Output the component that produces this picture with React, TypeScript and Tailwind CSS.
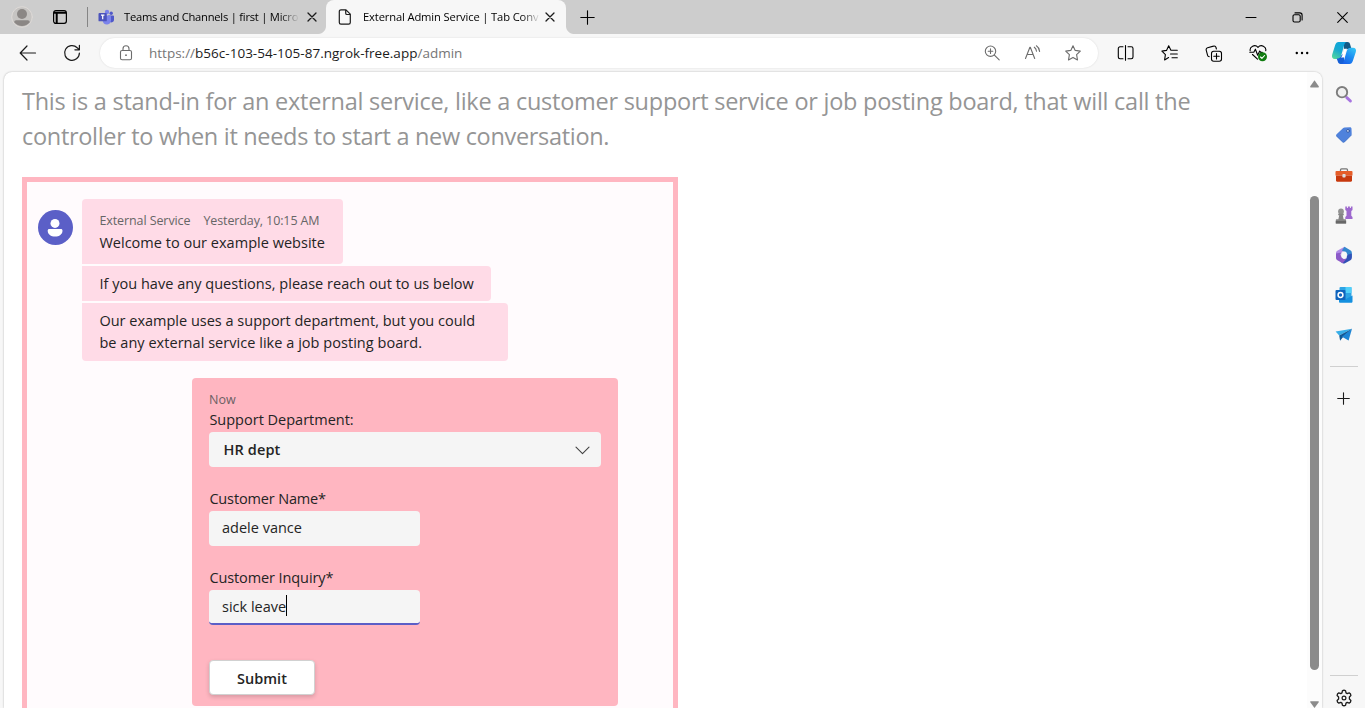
import React, { ReactNode } from 'react';

type IconProps = { w?: number; h?: number; className?: string; children: ReactNode };

function Icon({ w = 18, h = 18, className = '', children }: IconProps) {
  return (
    <svg
      width={w}
      height={h}
      viewBox={`0 0 ${w} ${h}`}
      fill="none"
      stroke="currentColor"
      strokeWidth="1.1"
      strokeLinecap="round"
      strokeLinejoin="round"
      className={`block shrink-0 ${className}`}
    >
      {children}
    </svg>
  );
}

function CloseIcon() {
  return (
    <Icon w={10} h={10} className="text-[#1b1b1b]">
      <path d="M1 1l8 8M9 1l-8 8" strokeWidth="1.3" />
    </Icon>
  );
}

function TeamsLogo() {
  return (
    <Icon w={16} h={16}>
      <g stroke="none">
        <circle cx="13.2" cy="4.2" r="1.7" fill="#5059c9" />
        <circle cx="9" cy="3" r="2.2" fill="#7b83eb" />
        <path d="M10 6.5h5.2c.4 0 .8.3.8.8v3.4a2.6 2.6 0 0 1-4 2.3z" fill="#5059c9" />
        <path d="M5 6.5h7.3c.4 0 .7.3.7.7v4.3a4.2 4.2 0 0 1-8.2 1z" fill="#7b83eb" />
        <rect x="0.5" y="4" width="8.3" height="8.3" rx="0.9" fill="#4b53bc" />
      </g>
      <path d="M3 6.2h3.4M4.7 6.2v4" stroke="#fff" strokeWidth="1.2" strokeLinecap="butt" />
    </Icon>
  );
}

function TabStrip() {
  return (
    <header className="flex h-[34px] shrink-0 bg-[#cdcdcd]">
      <div className="flex w-[88px] items-center pl-[11px]">
        <Icon w={22} h={22}>
          <circle cx="11" cy="11" r="10.3" fill="#c6c4c2" stroke="#dedad7" strokeWidth="1" />
          <circle cx="11" cy="8" r="5" fill="#8b8785" stroke="none" />
          <path d="M3.2 16.2c0-1.3.8-2 2-2h11.6c1.2 0 2 .7 2 2a10 10 0 0 1-15.6 0z" fill="#8b8785" stroke="none" />
        </Icon>
        <Icon w={16} h={16} className="ml-[19px] text-black">
          <rect x="1.6" y="1.6" width="12.8" height="12.8" rx="2.3" strokeWidth="1.2" />
          <path d="M2 3.7h12M4.7 4v10" strokeWidth="2" strokeLinecap="butt" />
        </Icon>
        <div className="ml-[19px] h-5 w-px shrink-0 bg-[#858585]" />
      </div>
      <div className="flex w-[238px] items-center pl-[10px]">
        <TeamsLogo />
        <div className="ml-[10px] w-[177px] whitespace-nowrap bg-linear-to-r from-black from-86% to-[#cdcdcd] to-99% bg-clip-text text-[11.2px] tracking-[-0.24px] text-transparent">
          Teams and Channels | first | Micro
        </div>
        <div className="ml-[6px]">
          <CloseIcon />
        </div>
      </div>
      <div className="relative flex w-[240px] items-center rounded-t-[8px] bg-[#f7f7f7] pl-[12px]">
        <div className="absolute bottom-0 left-[-8px] size-2 bg-[radial-gradient(circle_at_0_0,#cdcdcd_7.5px,#f7f7f7_8.5px)]" />
        <div className="absolute bottom-0 right-[-8px] size-2 bg-[radial-gradient(circle_at_100%_0,#cdcdcd_7.5px,#f7f7f7_8.5px)]" />
        <Icon w={14} h={16} className="text-[#1b1b1b]">
          <path d="M3 .8h5l4.3 4.3v8.3a1.7 1.7 0 0 1-1.7 1.7H3a1.7 1.7 0 0 1-1.700-1.700V2.500A1.700 1.700 0 0 1 3 .8zM7.700 1v3.200c0 .8.500 1.300 1.300 1.300h3.200" strokeWidth="1.2" />
        </Icon>
        <div className="ml-[11px] w-[177px] whitespace-nowrap bg-linear-to-r from-black from-88% to-[#f7f7f7] bg-clip-text text-[11.2px] tracking-[-0.14px] text-transparent">
          External Admin Service | Tab Conv
        </div>
        <div className="ml-[5px]">
          <CloseIcon />
        </div>
      </div>
      <div className="flex flex-1 items-center pl-[14px] text-black">
        <Icon w={15} h={15}>
          <path d="M7.500 .8v13.400M.8 7.500h13.400" />
        </Icon>
      </div>
      <div className="flex items-center gap-[35px] pr-[17px] text-black">
        <Icon w={12} h={12}>
          <path d="M1 6.500h10" strokeWidth="1" />
        </Icon>
        <Icon w={11} h={11} className="-mr-px">
          <rect x="1" y="2.800" width="7.200" height="7.200" rx="1.500" />
          <path d="M3 .9h4.800a2.300 2.300 0 0 1 2.300 2.300v4.700" />
        </Icon>
        <Icon w={11} h={11}>
          <path d="M.7.7l9.600 9.600M10.300.7L.7 10.300" />
        </Icon>
      </div>
    </header>
  );
}

function CopilotLogo() {
  return (
    <svg width="26" height="24" viewBox="0 0 26 24" className="block shrink-0">
      <defs>
        <linearGradient id="cpA" x1="0.7" y1="0" x2="0.2" y2="1">
          <stop offset="0" stopColor="#0aa5dc" />
          <stop offset="0.5" stopColor="#18a9d0" />
          <stop offset="1" stopColor="#52d79c" />
        </linearGradient>
        <linearGradient id="cpB" x1="0.8" y1="0" x2="0.2" y2="1">
          <stop offset="0" stopColor="#35c3f5" />
          <stop offset="0.5" stopColor="#1b8cf3" />
          <stop offset="1" stopColor="#1a5fe8" />
        </linearGradient>
      </defs>
      <path d="M13 1h3.500c1.500 0 2.200.9 2.600 2.200L20.500 8h-4c-2 0-3 1-3.600 3z" fill="#115a86" />
      <path d="M7.500 1H16c-1.500 0-2.300 1.200-2.800 3l-3 10.500c-.7 2.300-1.800 3.500-4 3.500H4c-2.500 0-3.600-1.800-2.800-4.500l3-9.500C4.900 2 5.900 1 7.500 1z" fill="url(#cpA)" />
      <path d="M13 23H9.500c-1.500 0-2.200-.9-2.600-2.200L5.700 17.500c2.400.200 3.800-.700 4.500-3L13 12z" fill="#155fd6" />
      <path d="M18.500 23H10c1.500 0 2.300-1.200 2.800-3l3-10.300C16.500 7.600 17.600 6.700 19.500 6.700H22c2.500 0 3.600 1.700 2.800 4.300L21.800 20c-.7 2-1.700 3-3.300 3z" fill="url(#cpB)" />
      <path d="M13.200 7.800h3.100c-1 .5-1.400 1.400-1.800 2.700l-1.700 6h-3c.9-.6 1.300-1.500 1.600-2.600z" fill="#fff" />
    </svg>
  );
}

function Toolbar() {
  return (
    <div className="flex h-[38px] shrink-0 items-center pr-[8px] text-[#1b1b1b]">
      <Icon w={18} h={16} className="ml-[19px]">
        <path d="M16.500 8H1.500M8 1L1.200 8 8 15" strokeWidth="1.2" />
      </Icon>
      <Icon w={18} h={18} className="ml-[26px]">
        <path d="M16.400 9a7.400 7.400 0 1 1-2.200-5.300L16.300 5.600M16.400 1.300v4.500h-4.500" strokeWidth="1.2" />
      </Icon>
      <div className="ml-[19px] flex h-[30px] w-[998px] items-center rounded-full bg-white pl-[19px] pr-[17px] text-[#6c6c6c] shadow-[0_0_2px_rgba(0,0,0,0.13)]">
        <Icon w={14} h={16}>
          <rect x="1.500" y="5.500" width="11" height="9.300" rx="1.600" />
          <path d="M4 5.300V3.700a3 3 0 0 1 6 0v1.600" />
          <circle cx="7" cy="10.200" r="0.900" fill="currentColor" stroke="none" />
        </Icon>
        <div className="ml-[16px] flex-1 whitespace-nowrap text-[13.5px] text-[#767676]">
          https://<span className="tracking-[0.02px] text-[#1b1b1b]">b56c-103-54-105-87.ngrok-free.app</span>/admin
        </div>
        <Icon w={16} h={16} className="mr-[24px]">
          <circle cx="6.500" cy="6.200" r="5.200" />
          <path d="M10.400 10.100l4.800 4.800M6.500 3.900v4.600M4.200 6.200h4.600" />
        </Icon>
        <Icon w={18} h={16} className="mr-[23px]">
          <path d="M1.500 13.500L5.900 2.200h.4l4.400 11.300M3 9.500h6.200" />
          <path d="M10.300 2.200c1.300.9 2 2.200 2.200 4M12.400.8c2 1.300 3 3.300 3.200 5.600" />
        </Icon>
        <Icon w={16} h={16}>
          <path d="M8 .7l2.200 4.700 5.100.7-3.700 3.600.9 5.200L8 12.400l-4.500 2.500.9-5.200L.7 6.100l5.100-.7z" />
        </Icon>
      </div>
      <Icon w={18} h={16} className="ml-[19px] text-black">
        <path d="M6 1.800H3A1.700 1.700 0 0 0 1.300 3.500v8.500A1.700 1.700 0 0 0 3 13.700h3M11 1.800h3.300A1.700 1.700 0 0 1 16 3.500v8.500a1.700 1.700 0 0 1-1.700 1.700H11M8.500.6v14.600" />
      </Icon>
      <Icon w={18} h={16} className="ml-[26px] text-black">
        <path d="M9.900 5.300L7.700.8 5.500 5.400.9 6.100l3.500 3.600-.8 5.200 4-2.300M9.900 5.300h6.400M9.500 9h6.800M11 12.700h5.300" />
      </Icon>
      <Icon w={18} h={17} className="ml-[26px] text-black">
        <rect x="6.500" y="6.200" width="10" height="10" rx="2.200" />
        <path d="M11.500 8.500v5.400M8.800 11.200h5.400M4.300 11.800a2 2 0 0 1-1.700-1.500L1.200 5.200a2 2 0 0 1 1.400-2.500L8.500 1.100a2 2 0 0 1 2.500 1.400l.4 1.500" />
      </Icon>
      <Icon w={20} h={18} className="ml-[26px] text-black">
        <path d="M1.200 6.800C.3 2.800 5.900-.3 9 3.300 12.100-.3 17.700 2.800 16.700 6.800M3.500 10.500L8.500 15.200M.800 8.200h4l1.600-3 2.300 6 2-4.200 1.100 1.400h1.500" />
        <circle cx="13.500" cy="12.800" r="4.500" fill="#107c10" stroke="none" />
        <path d="M11.500 13l1.400 1.400 2.700-2.900" stroke="#fff" />
      </Icon>
      <Icon w={16} h={4} className="ml-[25px] text-black">
        <g fill="currentColor" stroke="none">
          <circle cx="2.800" cy="2" r="1.200" />
          <circle cx="8" cy="2" r="1.200" />
          <circle cx="13.200" cy="2" r="1.200" />
        </g>
      </Icon>
      <div className="ml-auto">
        <CopilotLogo />
      </div>
    </div>
  );
}

function Sidebar() {
  return (
    <aside className="flex w-[43px] shrink-0 flex-col items-center pt-[14px] text-[#1b1b1b]">
      <div className="flex flex-col items-center gap-[22px]">
        <Icon>
          <path d="M11.800 11.600l3.600 3.400" stroke="#a774e0" strokeWidth="3" />
          <circle cx="7" cy="6.200" r="5.200" fill="#f0f0f0" stroke="#7d7d7d" strokeWidth="1.900" />
        </Icon>
        <Icon>
          <path d="M9.500 1.500L15 1.300c.9 0 1.400.6 1.500 1.400l.2 5.200c0 .5-.1.900-.5 1.300l-6.700 6.700c-.6.600-1.300.6-1.900 0L1.600 10.200c-.6-.6-.6-1.300 0-1.900l6.600-6.200c.4-.4.800-.6 1.300-.6z" fill="#4f82dc" stroke="none" />
          <path d="M1.400 9.900l6.300 6.100c.6.500 1.200.4 1.800-.1l6.700-6.700" stroke="#376bc5" strokeWidth="0.800" />
          <circle cx="13" cy="4.900" r="1.400" fill="#e9f0ff" stroke="#274f9d" strokeWidth="0.900" />
        </Icon>
        <Icon>
          <path d="M5.500 5.600V3.900c0-.6.400-1 1-1h5c.6 0 1 .4 1 1v1.700" stroke="#777" strokeWidth="1.300" />
          <path d="M1.300 5.100h15.400c.5 0 .8.3.8.8v3.700H.5V5.900c0-.5.300-.8.800-.8z" fill="#e55d28" stroke="none" />
          <path d="M1 9.600h16v5c0 .7-.4 1.100-1.100 1.100H2.100c-.7 0-1.100-.4-1.100-1.100z" fill="#c7390e" stroke="none" />
          <rect x="7.400" y="7.900" width="3.200" height="3.600" rx="0.800" fill="#ddd" stroke="none" />
        </Icon>
        <Icon>
          <g stroke="none">
            <path d="M10.300.5h1.600v1.600h1V.5h2v1.600h1V.5h1.600V4l-1.200 1v4.700l1.200 1.400v1.900h-7.200v-2l1.200-1.300V5l-1.200-1z" fill="#9d68ce" />
            <circle cx="6" cy="5.400" r="2.900" fill="#929292" />
            <path d="M3.200 7.700h5.600v1.500H7.800l.8 4h1.500c.7 0 1 .4 1 1V17.500H.8v-3.300c0-.6.300-1 1-1h1.600l.8-4h-1z" fill="#858585" />
            <path d="M.8 15h10.300v2.500H.8z" fill="#686868" />
          </g>
        </Icon>
        <Icon>
          <g stroke="none">
            <path d="M9.500.7L2.700 4.500C1.600 5.100 1 6 1 7.200v5.300l5.500-3V6.900l5.600-3.200z" fill="#b08be6" />
            <path d="M9.500.7l5.800 3.500c1 .6 1.500 1.500 1.500 2.600v5L11.600 9V6.700L6.900 4.600z" fill="#3388cf" />
            <path d="M16.800 7.500v4.300c0 1-.5 1.900-1.400 2.400l-5.400 3c-.8.400-1.600.4-2.300 0l-2.300-1.400 6.200-3.500V9z" fill="#3151b7" />
            <path d="M1 7.500v4.300c0 1 .5 1.900 1.400 2.400l5.300 3 4-4.800-3 .5-2.200-1.600V6.500z" fill="#8c5ac8" />
          </g>
          <path d="M7.600 5.900h3l1.500 3-1.500 3.100h-3L6 9z" fill="#f7f7f7" stroke="#f7f7f7" strokeWidth="0.600" />
        </Icon>
        <Icon>
          <g stroke="none">
            <rect x="4.500" y="1" width="12" height="13" rx="1" fill="#2da4e5" />
            <path d="M10.500 1h6v6h-6z" fill="#50d0fa" />
            <path d="M4 9.500l7 3.500 6.500-3.500v6c0 .8-.5 1.300-1.300 1.300H5.300c-.8 0-1.300-.5-1.300-1.300z" fill="#1490df" />
            <rect x="0.500" y="4" width="10" height="10" rx="1" fill="#0f64bd" />
          </g>
          <circle cx="5.500" cy="9" r="2.400" stroke="#fff" strokeWidth="1.500" />
        </Icon>
        <Icon>
          <g stroke="none">
            <path d="M17 2.800L.6 5.500 4.200 9.500z" fill="#37aee8" />
            <path d="M17 2.800L4.200 9.500l.9 5.200 2.600-3.200z" fill="#135995" />
            <path d="M17 2.800L7 10.800l6.600 3.700z" fill="#1c84d4" />
          </g>
        </Icon>
      </div>
      <div className="mt-[22px] h-px w-7 bg-[#d0d0d0]" />
      <Icon w={13} h={13} className="mt-[25px]">
        <path d="M6.500.7v11.600M.7 6.500h11.600" />
      </Icon>
      <div className="mt-auto h-px w-7 bg-[#d0d0d0]" />
      <Icon w={18} h={18} className="mb-[1px] mt-[13px]">
        <path d="M7.400 1.800Q9 .7 10.600 1.800L11 3.900l1.200.7 2-.7q1.700.8 1.700 2.700L14.400 8v2l1.500 1.400q0 1.900-1.700 2.700l-2-.7-1.200.7-.4 2.100q-1.600 1.100-3.200 0L7 14.100l-1.200-.7-2 .7q-1.700-.8-1.700-2.700L3.600 10V8L2.100 6.600q0-1.900 1.700-2.700l2 .7L7 3.900z" strokeWidth="1.3" />
        <circle cx="9" cy="9" r="1.900" strokeWidth="1.2" />
      </Icon>
    </aside>
  );
}

function Chat() {
  return (
    <section className="mt-[23px] flex h-[600px] w-[656px] flex-col border-[5px] border-[#ffb6c1] bg-[#fffbfd] pt-[17px] text-[14.5px] leading-[22px] text-[#242424]">
      <div className="flex gap-[9px] pl-[11px]">
        <svg width="35" height="35" viewBox="0 0 35 35" className="mt-[11px] block shrink-0">
          <circle cx="17.500" cy="17.500" r="17.500" fill="#5b5fc7" />
          <circle cx="17" cy="13.400" r="4.500" fill="#fff" />
          <path d="M11.300 19h11.600c1 0 1.600.7 1.600 1.700 0 3.500-3.200 5.800-7.400 5.800s-7.400-2.300-7.400-5.800c0-1 .6-1.700 1.600-1.700z" fill="#fff" />
        </svg>
        <div className="flex flex-col items-start gap-[2px] whitespace-nowrap">
          <div className="h-[65px] w-[261px] rounded-r-[4px] rounded-tl-[4px] bg-[#ffdbe7] pl-[17.4px] pt-[12px]">
            <div className="flex h-[21px] gap-[13px] text-[12.5px] leading-[20px] text-[#666]">
              <span className="tracking-[-0.09px]">External Service</span>
              <span className="tracking-[-0.11px]">Yesterday, 10:15 AM</span>
            </div>
            <div className="tracking-[0.02px]">Welcome to our example website</div>
          </div>
          <div className="h-[35px] w-[409px] rounded-r-[4px] bg-[#ffdbe7] pl-[17.4px] pt-[7px] tracking-[0.03px]">
            If you have any questions, please reach out to us below
          </div>
          <div className="h-[58px] w-[426px] rounded-r-[4px] rounded-bl-[4px] bg-[#ffdbe7] pl-[17.4px] pt-[7px]">
            Our example uses a support department, but you could
            <br />
            <span className="tracking-[0.04px]">be any external service like a job posting board.</span>
          </div>
        </div>
      </div>
      <form className="ml-[165px] mt-[17px] flex h-[328px] w-[426px] flex-col items-start rounded-[4px] bg-[#ffb6c1] px-[17px] pt-[12px]">
        <div className="h-[19px] text-[12.5px] leading-[20px] text-[#6b6064]">Now</div>
        <div className="h-[23px] pl-[0.4px]">Support Department:</div>
        <div className="flex h-[35px] w-full items-center justify-between rounded-[4px] bg-[#f5f5f5] pl-[14.500px] pr-[11px] font-semibold tracking-[0.13px]">
          HR dept
          <Icon w={15} h={9} className="mt-[2px] text-[#424242]">
            <path d="M1 1.200l6.500 6.500L14 1.200" />
          </Icon>
        </div>
        <label className="mt-[21px] h-[23px] pl-[0.4px] tracking-[-0.15px]">Customer Name*</label>
        <div className="flex h-[35px] w-[211px] rounded-[4px] bg-[#f5f5f5] pl-[13px] pt-[6px]">adele vance</div>
        <label className="mt-[21px] h-[23px] pl-[0.4px] tracking-[-0.1px]">Customer Inquiry*</label>
        <div className="flex h-[35px] w-[211px] overflow-hidden rounded-[4px] border-b-2 border-[#5b5fc7] bg-[#f5f5f5] pl-[13px] pt-[6px]">
          sick leave
          <span className="-mt-px h-[21px] w-px bg-black" />
        </div>
        <div className="mt-[35px] flex h-[35px] w-[106px] items-center justify-center rounded-[4px] border border-[#d1d1d1] bg-white pt-[2px] font-semibold shadow-[0_2px_4px_rgba(0,0,0,0.16)]">
          Submit
        </div>
      </form>
    </section>
  );
}

export default function App() {
  return (
    <div className="flex h-[708px] w-[1365px] flex-col overflow-hidden bg-[#f7f7f7] font-['Open_Sans','Noto_Sans',sans-serif]">
      <TabStrip />
      <Toolbar />
      <div className="flex min-h-0 flex-1">
        <main className="ml-[4px] flex w-[1318px] overflow-hidden rounded-t-[8px] bg-white shadow-[0_0_2px_rgba(0,0,0,0.3)]">
          <div className="flex-1 pl-[18px] pt-[12px]">
            <p className="whitespace-nowrap text-[23.5px] leading-[35px] text-[#959595]">
              <span className="tracking-[-0.255px]">
                This is a stand-in for an external service, like a customer support service or job posting board, that will call the
              </span>
              <br />
              <span className="tracking-[-0.31px]">controller to when it needs to start a new conversation.</span>
            </p>
            <Chat />
          </div>
          <div className="flex w-[15px] flex-col items-center bg-[#fcfcfc] pt-[8px]">
            <svg width="9" height="8" viewBox="0 0 9 8" className="block">
              <path d="M4.500 .2L8.900 6.500Q9 7.400 8.200 7.400H.8Q0 7.400.1 6.500z" fill="#8b8b8b" />
            </svg>
            <div className="mt-[108px] h-[474px] w-[9px] shrink-0 rounded-full bg-[#8b8b8b]" />
            <svg width="9" height="8" viewBox="0 0 9 8" className="mt-auto block shrink-0">
              <path d="M4.500 8L8.900 2Q9 1.200 8.200 1.200H.8Q0 1.200.1 2z" fill="#8b8b8b" />
            </svg>
          </div>
        </main>
        <Sidebar />
      </div>
    </div>
  );
}
